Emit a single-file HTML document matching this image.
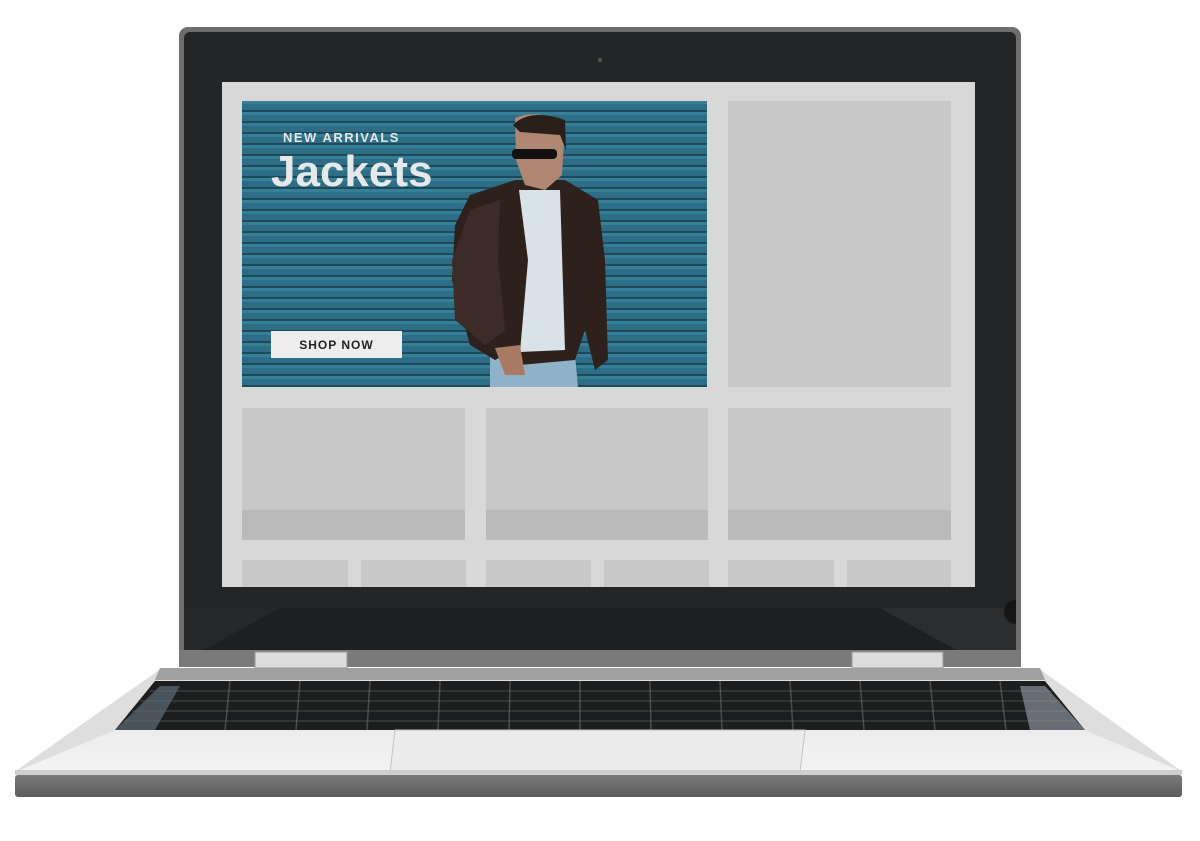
<!DOCTYPE html>
<html><head><meta charset="utf-8"><style>
html,body{margin:0;padding:0;background:#fff;width:1200px;height:841px;overflow:hidden}
svg{display:block}
</style></head><body>
<svg width="1200" height="841" viewBox="0 0 1200 841" xmlns="http://www.w3.org/2000/svg">
<defs>
<pattern id="stripes" x="0" y="101" width="10" height="11" patternUnits="userSpaceOnUse">
<rect width="10" height="11" fill="#2d6e86"/>
<rect y="0" width="10" height="3" fill="#367f99"/>
<rect y="9" width="10" height="2" fill="#1c4a5b"/>
</pattern>
<linearGradient id="deck" x1="0" y1="0" x2="0" y2="1"><stop offset="0" stop-color="#ececec"/><stop offset="1" stop-color="#f3f3f3"/></linearGradient>
<linearGradient id="edge" x1="0" y1="0" x2="0" y2="1"><stop offset="0" stop-color="#7a7a7a"/><stop offset="1" stop-color="#5c5c5c"/></linearGradient>
</defs>
<!-- lid -->
<rect x="179" y="27" width="842" height="640" rx="9" fill="#6e6e6e"/>
<rect x="184" y="32" width="832" height="620" rx="6" fill="#232526"/>
<circle cx="600" cy="60" r="2.2" fill="#555"/>
<!-- screen -->
<rect x="222" y="82" width="753" height="505" fill="#d8d8d8"/>
<rect x="184" y="608" width="832" height="44" fill="#1e1f20"/>
<polygon points="200,652 280,608 184,608 184,652" fill="#262728"/>
<polygon points="880,608 1016,608 1016,652 960,652" fill="#2c2d2e"/>
<path d="M1016 600 A12 12 0 0 0 1016 624Z" fill="#151515"/>
<rect x="179" y="650" width="842" height="17" fill="#7a7a7a"/>
<!-- banner -->
<rect x="242" y="101" width="465" height="286" fill="url(#stripes)"/>
<text x="283" y="142" font-family="Liberation Sans, sans-serif" font-size="13" font-weight="bold" letter-spacing="1.5" fill="#e6e6e6">NEW ARRIVALS</text>
<text x="271" y="186" font-family="Liberation Sans, sans-serif" font-size="44" font-weight="bold" fill="#e8e8e8">Jackets</text>
<rect x="271" y="331" width="131" height="27" fill="#ededed"/>
<text x="336.5" y="349" text-anchor="middle" font-family="Liberation Sans, sans-serif" font-size="12" font-weight="bold" letter-spacing="1" fill="#222">SHOP NOW</text>
<!-- man -->
<path d="M490 355 L575 355 L578 387 L490 387Z" fill="#8fb1c9"/>
<path d="M470 195 L515 180 L565 180 L598 200 L605 260 L608 360 L595 370 L585 330 L575 360 L520 365 L505 355 L495 360 L470 345 L452 280 L455 225Z" fill="#2e211c"/>
<path d="M519 190 L560 190 L565 350 L520 352 L528 260Z" fill="#d9e2e8"/>
<path d="M470 210 L500 200 L498 260 L505 330 L485 345 L455 320 L452 260Z" fill="#3d2c25"/>
<path d="M515 118 Q540 108 565 125 L562 175 L545 190 L525 185 L516 160Z" fill="#b08670"/>
<path d="M513 125 Q530 108 565 120 L566 150 L560 135 L520 132Z" fill="#2a1e19"/>
<rect x="512" y="149" width="45" height="10" rx="4" fill="#111"/>
<path d="M495 348 L520 345 L525 375 L505 375Z" fill="#a87a64"/>
<!-- right tall -->
<rect x="728" y="101" width="223" height="286" fill="#c8c8c8"/>
<g fill="#c8c8c8">
<rect x="242" y="408" width="223" height="132"/>
<rect x="486" y="408" width="222" height="132"/>
<rect x="728" y="408" width="223" height="132"/>
</g>
<g fill="#bababa">
<rect x="242" y="510" width="223" height="30"/>
<rect x="486" y="510" width="222" height="30"/>
<rect x="728" y="510" width="223" height="30"/>
</g>
<g fill="#c8c8c8">
<rect x="242" y="560" width="106" height="27"/>
<rect x="361" y="560" width="105" height="27"/>
<rect x="486" y="560" width="105" height="27"/>
<rect x="604" y="560" width="105" height="27"/>
<rect x="728" y="560" width="106" height="27"/>
<rect x="847" y="560" width="104" height="27"/>
</g>
<!-- base deck -->
<polygon points="162,668 1038,668 1180,770 17,770" fill="#dedede"/>
<polygon points="160,668 1040,668 1045,680 155,680" fill="#a0a0a0"/>
<!-- keyboard -->
<polygon points="155,681 1045,681 1085,730 115,730" fill="#1c1d1e"/>
<g stroke="#6a6a6a" stroke-width="1" opacity="0.6">
<line x1="150" y1="691" x2="1052" y2="691"/>
<line x1="140" y1="701" x2="1060" y2="701"/>
<line x1="132" y1="711" x2="1068" y2="711"/>
<line x1="124" y1="721" x2="1076" y2="721"/>
</g>
<g stroke="#7a7a7a" stroke-width="1.5" opacity="0.5">
<line x1="230" y1="681" x2="225" y2="730"/><line x1="300" y1="681" x2="296" y2="730"/>
<line x1="370" y1="681" x2="367" y2="730"/><line x1="440" y1="681" x2="438" y2="730"/>
<line x1="510" y1="681" x2="509" y2="730"/><line x1="580" y1="681" x2="580" y2="730"/>
<line x1="650" y1="681" x2="651" y2="730"/><line x1="720" y1="681" x2="722" y2="730"/>
<line x1="790" y1="681" x2="793" y2="730"/><line x1="860" y1="681" x2="864" y2="730"/>
<line x1="930" y1="681" x2="935" y2="730"/><line x1="1000" y1="681" x2="1006" y2="730"/>
</g>
<polygon points="160,686 180,686 155,730 115,730" fill="#5d6b75" opacity="0.7"/>
<polygon points="1020,686 1045,686 1085,730 1030,730" fill="#9aa3aa" opacity="0.6"/>
<!-- front deck -->
<polygon points="115,730 1085,730 1178,770 20,770" fill="url(#deck)"/>
<polygon points="395,730 805,730 800,772 390,772" fill="#ececec" stroke="#c4c4c4" stroke-width="1"/>
<rect x="15" y="770" width="1167" height="5" fill="#cfcfcf"/>
<rect x="15" y="775" width="1167" height="22" rx="3" fill="url(#edge)"/>
<!-- hinges -->
<rect x="255" y="652" width="92" height="16" fill="#dcdcdc" stroke="#999" stroke-width="1"/>
<rect x="852" y="652" width="91" height="16" fill="#dcdcdc" stroke="#999" stroke-width="1"/>
</svg>
</body></html>
